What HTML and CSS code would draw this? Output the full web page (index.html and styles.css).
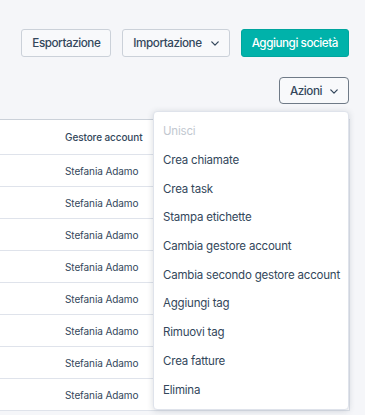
FILE: index.html
```html
<!DOCTYPE html>
<html lang="it">
<head>
<meta charset="utf-8">
<link rel="stylesheet" href="styles.css">
</head>
<body>
<div class="page">
  <div class="toolbar">
    <button class="btn">Esportazione</button>
    <button class="btn">Importazione <svg class="chev" viewBox="0 0 10 6" width="8" height="5"><path d="M1 1l4 4 4-4" fill="none" stroke="currentColor" stroke-width="1.6" stroke-linecap="round" stroke-linejoin="round"/></svg></button>
    <button class="btn primary">Aggiungi società</button>
  </div>
  <div class="actions">
    <button class="btn dark">Azioni <svg class="chev" viewBox="0 0 10 6" width="8" height="5"><path d="M1 1l4 4 4-4" fill="none" stroke="currentColor" stroke-width="1.6" stroke-linecap="round" stroke-linejoin="round"/></svg></button>
    <ul class="menu">
      <li class="disabled">Unisci</li>
      <li>Crea chiamate</li>
      <li>Crea task</li>
      <li>Stampa etichette</li>
      <li>Cambia gestore account</li>
      <li>Cambia secondo gestore account</li>
      <li>Aggiungi tag</li>
      <li>Rimuovi tag</li>
      <li>Crea fatture</li>
      <li>Elimina</li>
    </ul>
  </div>
  <div class="table">
    <div class="row head">Gestore account</div>
    <div class="row">Stefania Adamo</div>
    <div class="row">Stefania Adamo</div>
    <div class="row">Stefania Adamo</div>
    <div class="row">Stefania Adamo</div>
    <div class="row">Stefania Adamo</div>
    <div class="row">Stefania Adamo</div>
    <div class="row">Stefania Adamo</div>
    <div class="row">Stefania Adamo</div>
  </div>
</div>
</body>
</html>
```
FILE: styles.css
```css
* { box-sizing: border-box; }
html, body { margin: 0; padding: 0; }
body {
  background: #f5f6f9;
  font-family: Inter, "Noto Sans", sans-serif;
  color: #33475b;
  width: 365px;
  height: 415px;
  overflow: hidden;
}
.page { position: relative; }
.toolbar {
  display: flex;
  justify-content: flex-end;
  gap: 11px;
  padding: 29px 16px 0 0;
}
.btn {
  height: 28px;
  padding: 0 10px;
  border: 1px solid #cbd1d9;
  border-radius: 3px;
  background: #f8f9fb;
  font-family: inherit;
  font-size: 11.7px;
  font-weight: 500;
  letter-spacing: -0.45px;
  color: #33475b;
  display: inline-flex;
  align-items: center;
  gap: 9px;
  white-space: nowrap;
  cursor: pointer;
}
.btn.primary {
  background: #00b2aa;
  border-color: #00a59e;
  color: #ffffff;
}
.btn.dark {
  border-color: #6f7a87;
  border-width: 1.5px;
  border-radius: 4px;
  height: 27px;
  padding: 0 10px;
  gap: 8px;
}
.chev { display: block; margin-top: 1px; }
.actions {
  display: flex;
  justify-content: flex-end;
  padding: 20px 16px 0 0;
}
.menu {
  position: absolute;
  top: 111px;
  left: 153px;
  width: 196px;
  margin: 0;
  padding: 5px 0;
  list-style: none;
  background: #ffffff;
  border: 1px solid #dfe3eb;
  border-radius: 4px;
  box-shadow: 0 1px 6px rgba(45, 62, 80, 0.18);
  z-index: 2;
}
.menu li {
  height: 28.7px;
  display: flex;
  align-items: center;
  padding-left: 9px;
  font-size: 11.5px;
  letter-spacing: -0.2px;
  color: #33475b;
  white-space: nowrap;
}
.menu li.disabled { color: #c2c8d0; }
.table {
  margin-top: 15px;
  width: 350px;
  background: #ffffff;
  border-top: 1px solid #cbd1d9;
  border-right: 1px solid #dfe3eb;
}
.row {
  height: 32px;
  display: flex;
  align-items: center;
  padding-left: 65px;
  font-size: 10px;
  letter-spacing: -0.1px;
  border-bottom: 1px solid #dfe3eb;
}
.row.head {
  height: 35px;
  font-weight: 500;
}
```
